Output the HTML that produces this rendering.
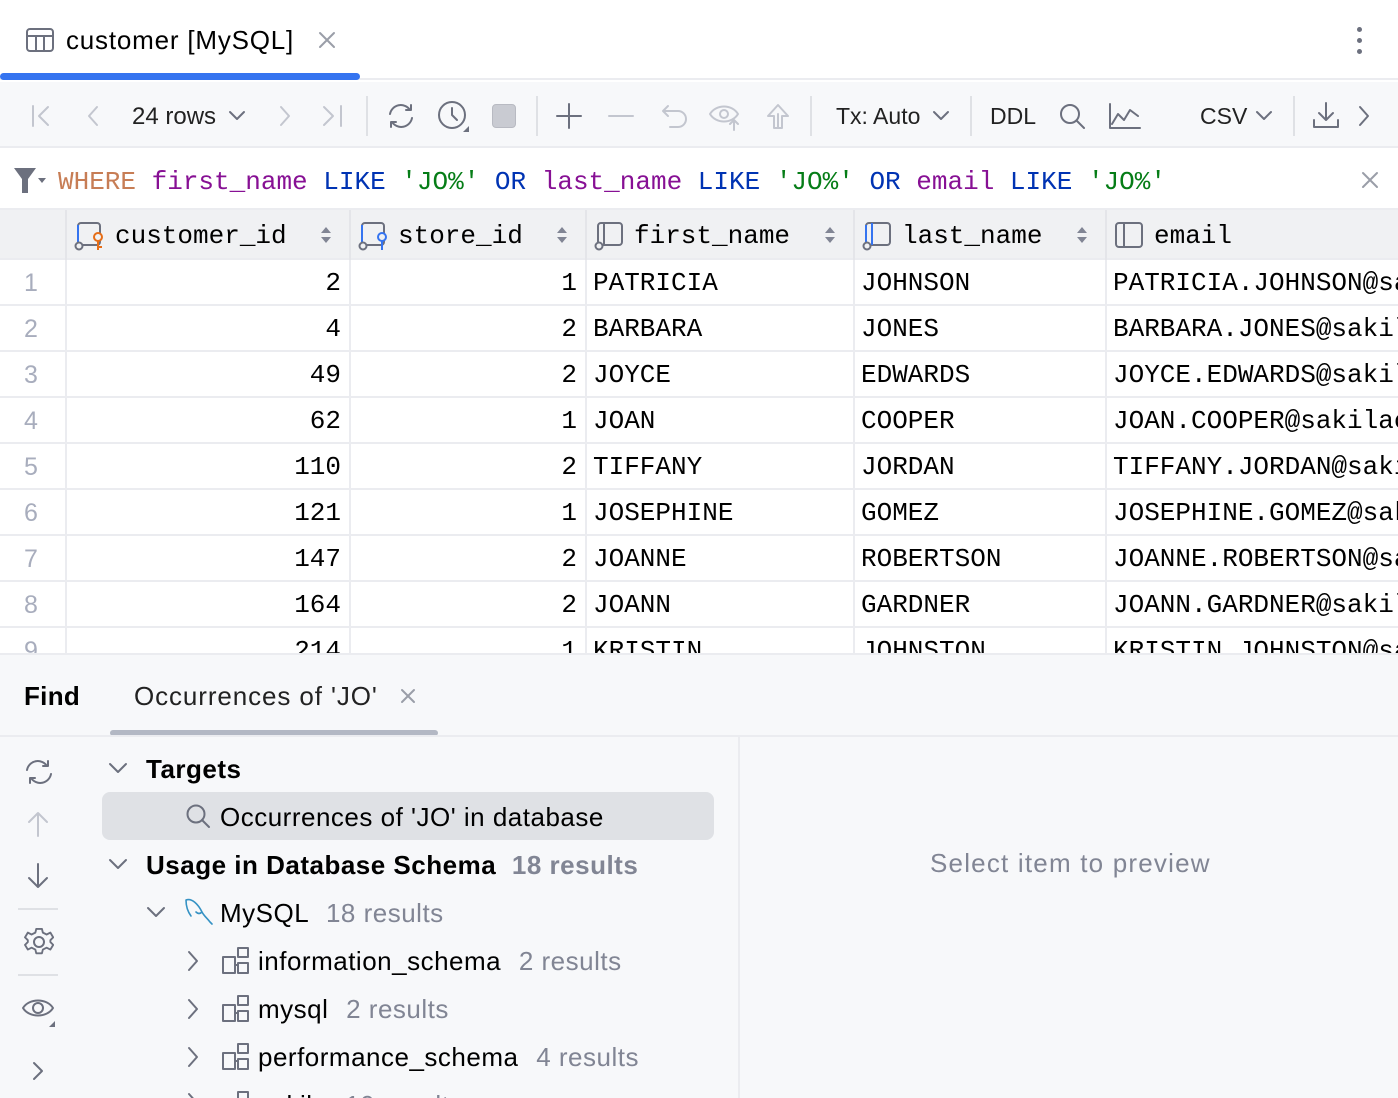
<!DOCTYPE html>
<html style="overflow:hidden;height:1098px"><head><meta charset="utf-8"><style>
*{box-sizing:border-box;margin:0;padding:0}
body{width:1398px;height:1098px;overflow:hidden;background:#fff;font-family:"Liberation Sans",sans-serif;color:#000;position:relative}
.a{position:absolute}
.mono{font-family:"Liberation Mono",monospace;font-size:26px}
.ic{position:absolute;fill:none;stroke:#6c707e;stroke-width:2;stroke-linecap:round;stroke-linejoin:round}
.cell{position:absolute;height:46px;line-height:46px;border-right:2px solid #ebecf0;border-bottom:2px solid #ebecf0;overflow:hidden;white-space:nowrap;padding:0 8px}
.r{text-align:right}
.num{color:#a8adbd;font-family:"Liberation Sans",sans-serif;font-size:25px;padding-left:24px;border-right:2px solid #ebecf0;background:#fff}
.t{position:absolute;font-size:26px;letter-spacing:0.5px;white-space:nowrap}
.g{color:#818594}
</style></head><body>
<div class="a" style="left:0;top:0;width:1398px;height:80px;background:#fff;border-bottom:2px solid #ebecf0"></div>
<svg class="ic" style="left:26px;top:28px" width="28" height="24"><rect x="1" y="1" width="26" height="22" rx="3"/><path d="M1 8H27M10 8V23M18 8V23"/></svg>
<div class="t" style="left:66px;top:25px;font-size:26px;letter-spacing:0.8px">customer [MySQL]</div>
<svg class="ic" style="left:318px;top:31px;stroke:#9a9ea8" width="18" height="18"><path d="M2 2L16 16M16 2L2 16"/></svg>
<div class="a" style="left:0;top:73px;width:360px;height:7px;background:#3574f0;border-radius:4px"></div>
<div class="a" style="left:1357px;top:27px;width:5px;height:5px;border-radius:50%;background:#6c707e"></div>
<div class="a" style="left:1357px;top:38px;width:5px;height:5px;border-radius:50%;background:#6c707e"></div>
<div class="a" style="left:1357px;top:49px;width:5px;height:5px;border-radius:50%;background:#6c707e"></div>
<div class="a" style="left:0;top:82px;width:1398px;height:66px;background:#f7f8fa;border-bottom:2px solid #ebecf0"></div>
<svg class="ic" style="left:30px;top:104px;stroke:#c3c6cf" width="24" height="24"><path d="M3 2V22M18 3L9 12L18 21"/></svg>
<svg class="ic" style="left:82px;top:104px;stroke:#c3c6cf" width="24" height="24"><path d="M15 3L7 12L15 21"/></svg>
<div class="t" style="left:132px;top:103px;color:#222;font-size:24px;letter-spacing:0">24 rows</div>
<svg class="ic" style="left:228px;top:110px" width="18" height="12"><path d="M2 2L9 9L16 2"/></svg>
<svg class="ic" style="left:272px;top:104px;stroke:#c3c6cf" width="24" height="24"><path d="M9 3L17 12L9 21"/></svg>
<svg class="ic" style="left:320px;top:104px;stroke:#c3c6cf" width="26" height="24"><path d="M4 3L13 12L4 21M21 2V22"/></svg>
<div class="a" style="left:366px;top:96px;width:2px;height:40px;background:#dfe1e5"></div>
<svg class="ic" style="left:384px;top:100px" width="34" height="32"><path d="M6 14A11 11 0 0 1 26 10M28 18A11 11 0 0 1 8 22M22 10H27V5M12 22H7V27"/></svg>
<svg class="ic" style="left:437px;top:100px" width="34" height="34"><circle cx="15" cy="15" r="13"/><path d="M15 8V15L20 20"/><path d="M26 32L32 26V32Z" fill="#6c707e" stroke="none"/></svg>
<div class="a" style="left:492px;top:104px;width:24px;height:24px;background:#c9cbd2;border-radius:4px;border:1px solid #b8bac2"></div>
<div class="a" style="left:536px;top:96px;width:2px;height:40px;background:#dfe1e5"></div>
<svg class="ic" style="left:555px;top:102px" width="28" height="28"><path d="M14 2V26M2 14H26"/></svg>
<svg class="ic" style="left:607px;top:102px;stroke:#c3c6cf" width="28" height="28"><path d="M2 14H26"/></svg>
<svg class="ic" style="left:660px;top:102px;stroke:#c3c6cf" width="30" height="28"><path d="M8 4L3 9L8 14M3 9H18A8 8 0 0 1 18 25H10"/></svg>
<svg class="ic" style="left:708px;top:100px;stroke:#c3c6cf" width="36" height="32"><path d="M2 14C8 4 24 4 30 14C24 24 8 24 2 14Z"/><circle cx="16" cy="14" r="4"/><path d="M26 30V20M22 24L26 20L30 24"/></svg>
<svg class="ic" style="left:764px;top:102px;stroke:#c3c6cf" width="28" height="28"><path d="M14 26V12M4 14L14 3L24 14H18V26H10V14Z"/></svg>
<div class="a" style="left:810px;top:96px;width:2px;height:40px;background:#dfe1e5"></div>
<div class="t" style="left:836px;top:103px;color:#222;font-size:23px;letter-spacing:0">Tx: Auto</div>
<svg class="ic" style="left:932px;top:110px" width="18" height="12"><path d="M2 2L9 9L16 2"/></svg>
<div class="a" style="left:970px;top:96px;width:2px;height:40px;background:#dfe1e5"></div>
<div class="t" style="left:990px;top:103px;color:#222;font-size:23px;letter-spacing:0">DDL</div>
<svg class="ic" style="left:1058px;top:102px" width="28" height="28"><circle cx="12" cy="12" r="9"/><path d="M19 19L26 26"/></svg>
<svg class="ic" style="left:1108px;top:102px" width="34" height="28"><path d="M2 2V26H32M4 22L10 12L16 18L22 8L30 14"/></svg>
<div class="t" style="left:1200px;top:103px;color:#222;font-size:23px;letter-spacing:0">CSV</div>
<svg class="ic" style="left:1255px;top:110px" width="18" height="12"><path d="M2 2L9 9L16 2"/></svg>
<div class="a" style="left:1293px;top:96px;width:2px;height:40px;background:#dfe1e5"></div>
<svg class="ic" style="left:1311px;top:100px" width="30" height="30"><path d="M15 3V20M8 13L15 20L22 13M3 20V27H27V20"/></svg>
<svg class="ic" style="left:1356px;top:104px" width="16" height="24"><path d="M4 3L12 12L4 21"/></svg>
<svg class="a" style="left:14px;top:168px" width="32" height="26"><path d="M0 0H22L14 11V25H8V11Z" fill="#6c707e"/><path d="M24 10H32L28 15Z" fill="#6c707e"/></svg>
<div class="a mono" style="left:58px;top:167px;white-space:pre"><span style="color:#c77d55">WHERE</span> <span style="color:#871094">first_name</span> <span style="color:#0033b3">LIKE</span> <span style="color:#067d17">'JO%'</span> <span style="color:#0033b3">OR</span> <span style="color:#871094">last_name</span> <span style="color:#0033b3">LIKE</span> <span style="color:#067d17">'JO%'</span> <span style="color:#0033b3">OR</span> <span style="color:#871094">email</span> <span style="color:#0033b3">LIKE</span> <span style="color:#067d17">'JO%'</span></div>
<svg class="ic" style="left:1361px;top:171px;stroke:#9a9ea8" width="18" height="18"><path d="M2 2L16 16M16 2L2 16"/></svg>
<div class="a" style="left:0;top:208px;width:1398px;height:52px;background:#f0f1f3;border-top:2px solid #ebecf0;border-bottom:2px solid #ebecf0"></div>
<div class="a" style="left:65px;top:210px;width:2px;height:50px;background:#e4e5e9"></div>
<div class="a" style="left:349px;top:210px;width:2px;height:50px;background:#e4e5e9"></div>
<div class="a" style="left:585px;top:210px;width:2px;height:50px;background:#e4e5e9"></div>
<div class="a" style="left:853px;top:210px;width:2px;height:50px;background:#e4e5e9"></div>
<div class="a" style="left:1105px;top:210px;width:2px;height:50px;background:#e4e5e9"></div>
<svg class="a" style="left:74px;top:221px" width="34" height="30" fill="none" stroke-width="2"><rect x="4" y="2" width="22" height="22" rx="3" stroke="#6c707e"/><path d="M4 4V24" stroke="#3574f0"/><circle cx="5" cy="25" r="3.5" stroke="#6c707e" fill="#f0f1f3"/><circle cx="24" cy="16" r="4" stroke="#e66d17" fill="#f0f1f3"/><path d="M24 20V29M24 26H28" stroke="#e66d17"/></svg>
<div class="a mono" style="left:115px;top:221px">customer_id</div>
<svg class="a" style="left:358px;top:221px" width="34" height="30" fill="none" stroke-width="2"><rect x="4" y="2" width="22" height="22" rx="3" stroke="#6c707e"/><path d="M4 4V24" stroke="#3574f0"/><circle cx="5" cy="25" r="3.5" stroke="#6c707e" fill="#f0f1f3"/><circle cx="24" cy="16" r="4" stroke="#3574f0" fill="#f0f1f3"/><path d="M24 20V29" stroke="#3574f0"/></svg>
<div class="a mono" style="left:398px;top:221px">store_id</div>
<svg class="a" style="left:594px;top:221px" width="34" height="30" fill="none" stroke-width="2"><rect x="4" y="2" width="24" height="22" rx="3" stroke="#6c707e"/><path d="M10 2V24" stroke="#6c707e"/><circle cx="5" cy="25" r="3.5" stroke="#6c707e" fill="#f0f1f3"/></svg>
<div class="a mono" style="left:634px;top:221px">first_name</div>
<svg class="a" style="left:862px;top:221px" width="34" height="30" fill="none" stroke-width="2"><rect x="4" y="2" width="24" height="22" rx="3" stroke="#6c707e"/><path d="M4 4V24M10 2V24" stroke="#3574f0"/><circle cx="5" cy="25" r="3.5" stroke="#6c707e" fill="#f0f1f3"/></svg>
<div class="a mono" style="left:902px;top:221px">last_name</div>
<svg class="a" style="left:1114px;top:221px" width="34" height="30" fill="none" stroke-width="2"><rect x="2" y="2" width="26" height="24" rx="3" stroke="#6c707e"/><path d="M10 2V26" stroke="#6c707e"/></svg>
<div class="a mono" style="left:1154px;top:221px">email</div>
<svg class="a" style="left:320px;top:225px" width="12" height="20"><path d="M6 2L11 8H1ZM6 18L11 12H1Z" fill="#818594"/></svg>
<svg class="a" style="left:556px;top:225px" width="12" height="20"><path d="M6 2L11 8H1ZM6 18L11 12H1Z" fill="#818594"/></svg>
<svg class="a" style="left:824px;top:225px" width="12" height="20"><path d="M6 2L11 8H1ZM6 18L11 12H1Z" fill="#818594"/></svg>
<svg class="a" style="left:1076px;top:225px" width="12" height="20"><path d="M6 2L11 8H1ZM6 18L11 12H1Z" fill="#818594"/></svg>
<div class="a mono" style="left:0;top:260px;width:1398px;height:393px;overflow:hidden">
<div style="position:relative">
<div class="cell num" style="top:0;left:0;width:67px">1</div><div class="cell r" style="top:0;left:67px;width:284px">2</div><div class="cell r" style="top:0;left:351px;width:236px">1</div><div class="cell" style="top:0;left:587px;width:268px;padding-left:6px">PATRICIA</div><div class="cell" style="top:0;left:855px;width:252px;padding-left:6px">JOHNSON</div><div class="cell" style="top:0;left:1107px;width:300px;padding-left:6px">PATRICIA.JOHNSON@sakilacustomer.org</div>
<div class="cell num" style="top:46px;left:0;width:67px">2</div><div class="cell r" style="top:46px;left:67px;width:284px">4</div><div class="cell r" style="top:46px;left:351px;width:236px">2</div><div class="cell" style="top:46px;left:587px;width:268px;padding-left:6px">BARBARA</div><div class="cell" style="top:46px;left:855px;width:252px;padding-left:6px">JONES</div><div class="cell" style="top:46px;left:1107px;width:300px;padding-left:6px">BARBARA.JONES@sakilacustomer.org</div>
<div class="cell num" style="top:92px;left:0;width:67px">3</div><div class="cell r" style="top:92px;left:67px;width:284px">49</div><div class="cell r" style="top:92px;left:351px;width:236px">2</div><div class="cell" style="top:92px;left:587px;width:268px;padding-left:6px">JOYCE</div><div class="cell" style="top:92px;left:855px;width:252px;padding-left:6px">EDWARDS</div><div class="cell" style="top:92px;left:1107px;width:300px;padding-left:6px">JOYCE.EDWARDS@sakilacustomer.org</div>
<div class="cell num" style="top:138px;left:0;width:67px">4</div><div class="cell r" style="top:138px;left:67px;width:284px">62</div><div class="cell r" style="top:138px;left:351px;width:236px">1</div><div class="cell" style="top:138px;left:587px;width:268px;padding-left:6px">JOAN</div><div class="cell" style="top:138px;left:855px;width:252px;padding-left:6px">COOPER</div><div class="cell" style="top:138px;left:1107px;width:300px;padding-left:6px">JOAN.COOPER@sakilacustomer.org</div>
<div class="cell num" style="top:184px;left:0;width:67px">5</div><div class="cell r" style="top:184px;left:67px;width:284px">110</div><div class="cell r" style="top:184px;left:351px;width:236px">2</div><div class="cell" style="top:184px;left:587px;width:268px;padding-left:6px">TIFFANY</div><div class="cell" style="top:184px;left:855px;width:252px;padding-left:6px">JORDAN</div><div class="cell" style="top:184px;left:1107px;width:300px;padding-left:6px">TIFFANY.JORDAN@sakilacustomer.org</div>
<div class="cell num" style="top:230px;left:0;width:67px">6</div><div class="cell r" style="top:230px;left:67px;width:284px">121</div><div class="cell r" style="top:230px;left:351px;width:236px">1</div><div class="cell" style="top:230px;left:587px;width:268px;padding-left:6px">JOSEPHINE</div><div class="cell" style="top:230px;left:855px;width:252px;padding-left:6px">GOMEZ</div><div class="cell" style="top:230px;left:1107px;width:300px;padding-left:6px">JOSEPHINE.GOMEZ@sakilacustomer.org</div>
<div class="cell num" style="top:276px;left:0;width:67px">7</div><div class="cell r" style="top:276px;left:67px;width:284px">147</div><div class="cell r" style="top:276px;left:351px;width:236px">2</div><div class="cell" style="top:276px;left:587px;width:268px;padding-left:6px">JOANNE</div><div class="cell" style="top:276px;left:855px;width:252px;padding-left:6px">ROBERTSON</div><div class="cell" style="top:276px;left:1107px;width:300px;padding-left:6px">JOANNE.ROBERTSON@sakilacustomer.org</div>
<div class="cell num" style="top:322px;left:0;width:67px">8</div><div class="cell r" style="top:322px;left:67px;width:284px">164</div><div class="cell r" style="top:322px;left:351px;width:236px">2</div><div class="cell" style="top:322px;left:587px;width:268px;padding-left:6px">JOANN</div><div class="cell" style="top:322px;left:855px;width:252px;padding-left:6px">GARDNER</div><div class="cell" style="top:322px;left:1107px;width:300px;padding-left:6px">JOANN.GARDNER@sakilacustomer.org</div>
<div class="cell num" style="top:368px;left:0;width:67px">9</div><div class="cell r" style="top:368px;left:67px;width:284px">214</div><div class="cell r" style="top:368px;left:351px;width:236px">1</div><div class="cell" style="top:368px;left:587px;width:268px;padding-left:6px">KRISTIN</div><div class="cell" style="top:368px;left:855px;width:252px;padding-left:6px">JOHNSTON</div><div class="cell" style="top:368px;left:1107px;width:300px;padding-left:6px">KRISTIN.JOHNSTON@sakilacustomer.org</div>
</div></div>
<div class="a" style="left:0;top:653px;width:1398px;height:445px;background:#f7f8fa;border-top:2px solid #ebecf0;overflow:hidden">
<div class="t" style="left:24px;top:26px;font-weight:bold;letter-spacing:0.3px">Find</div>
<div class="t" style="left:134px;top:26px;color:#222;letter-spacing:0.9px">Occurrences of 'JO'</div>
<svg class="ic" style="left:400px;top:33px;stroke:#9a9ea8" width="16" height="16"><path d="M2 2L14 14M14 2L2 14"/></svg>
<div class="a" style="left:110px;top:75px;width:328px;height:6px;background:#b3b8c4;border-radius:3px"></div>
<div class="a" style="left:0;top:80px;width:1398px;height:2px;background:#ebecf0"></div>
<div class="a" style="left:738px;top:82px;width:2px;height:370px;background:#ebecf0"></div>
<svg class="ic" style="left:22px;top:101px" width="34" height="32"><path d="M5 14A11 11 0 0 1 25 10M29 18A11 11 0 0 1 9 22M21 10H26V5M13 22H8V27"/></svg>
<svg class="ic" style="left:26px;top:155px;stroke:#c3c6cf" width="24" height="28"><path d="M12 26V3M3 12L12 3L21 12"/></svg>
<svg class="ic" style="left:26px;top:207px" width="24" height="28"><path d="M12 2V25M3 16L12 25L21 16"/></svg>
<div class="a" style="left:18px;top:253px;width:40px;height:2px;background:#dfe1e5"></div>
<svg class="ic" style="left:24px;top:272px" width="30" height="30"><circle cx="15" cy="15" r="5"/><path d="M12 2H18L19 6L23 8L27 6L30 11L27 14V16L30 19L27 24L23 22L19 24L18 28H12L11 24L7 22L3 24L0 19L3 16V14L0 11L3 6L7 8L11 6Z" transform="translate(1 0) scale(0.94)"/></svg>
<div class="a" style="left:18px;top:319px;width:40px;height:2px;background:#dfe1e5"></div>
<svg class="ic" style="left:20px;top:339px" width="38" height="34"><path d="M3 14C9 4 27 4 33 14C27 24 9 24 3 14Z"/><circle cx="18" cy="14" r="5"/><path d="M35 27L35 33L29 33Z" fill="#6c707e" stroke="none"/></svg>
<svg class="ic" style="left:30px;top:405px" width="16" height="22"><path d="M4 3L12 11L4 19"/></svg>
<svg class="ic" style="left:108px;top:107px" width="20" height="14"><path d="M2 2L10 10L18 2"/></svg>
<div class="t" style="left:146px;top:99px;font-weight:bold">Targets</div>
<div class="a" style="left:102px;top:137px;width:612px;height:48px;background:#dfe1e5;border-radius:8px"></div>
<svg class="ic" style="left:185px;top:148px" width="28" height="28"><circle cx="11" cy="11" r="8.5"/><path d="M17 17L24 24"/></svg>
<div class="t" style="left:220px;top:147px">Occurrences of 'JO' in database</div>
<svg class="ic" style="left:108px;top:203px" width="20" height="14"><path d="M2 2L10 10L18 2"/></svg>
<div class="t" style="left:146px;top:195px;font-weight:bold">Usage in Database Schema <span class="g" style="margin-left:8px">18 results</span></div>
<svg class="ic" style="left:146px;top:251px" width="20" height="14"><path d="M2 2L10 10L18 2"/></svg>
<svg class="a" style="left:182px;top:241px" width="32" height="30" fill="none" stroke="#3592c4" stroke-width="1.6" stroke-linecap="round"><path d="M4 4C10 2 16 8 20 16C22 20 25 22 28 26M4 4C4 10 6 16 9 20M20 16C18 18 16 18 14 16M28 26L30 28"/></svg>
<div class="t" style="left:220px;top:243px">MySQL <span class="g" style="margin-left:10px">18 results</span></div>
<svg class="ic" style="left:186px;top:295px" width="14" height="22"><path d="M3 2L11 11L3 20"/></svg>
<svg class="ic" style="left:222px;top:291px" width="30" height="30"><rect x="1" y="11" width="12" height="16"/><rect x="16" y="2" width="10" height="9"/><rect x="16" y="17" width="10" height="10"/><path d="M13 19H16"/></svg>
<div class="t" style="left:258px;top:291px">information_schema <span class="g" style="margin-left:10px">2 results</span></div>
<svg class="ic" style="left:186px;top:343px" width="14" height="22"><path d="M3 2L11 11L3 20"/></svg>
<svg class="ic" style="left:222px;top:339px" width="30" height="30"><rect x="1" y="11" width="12" height="16"/><rect x="16" y="2" width="10" height="9"/><rect x="16" y="17" width="10" height="10"/><path d="M13 19H16"/></svg>
<div class="t" style="left:258px;top:339px">mysql <span class="g" style="margin-left:10px">2 results</span></div>
<svg class="ic" style="left:186px;top:391px" width="14" height="22"><path d="M3 2L11 11L3 20"/></svg>
<svg class="ic" style="left:222px;top:387px" width="30" height="30"><rect x="1" y="11" width="12" height="16"/><rect x="16" y="2" width="10" height="9"/><rect x="16" y="17" width="10" height="10"/><path d="M13 19H16"/></svg>
<div class="t" style="left:258px;top:387px">performance_schema <span class="g" style="margin-left:10px">4 results</span></div>
<svg class="ic" style="left:186px;top:437px" width="14" height="22"><path d="M3 2L11 11L3 20"/></svg>
<svg class="ic" style="left:222px;top:435px" width="30" height="30"><rect x="1" y="11" width="12" height="16"/><rect x="16" y="2" width="10" height="9"/></svg>
<div class="t" style="left:258px;top:435px">sakila <span class="g" style="margin-left:10px">10 results</span></div>
<div class="t" style="left:930px;top:193px;color:#818594;letter-spacing:1.2px">Select item to preview</div>
</div>
</body></html>
